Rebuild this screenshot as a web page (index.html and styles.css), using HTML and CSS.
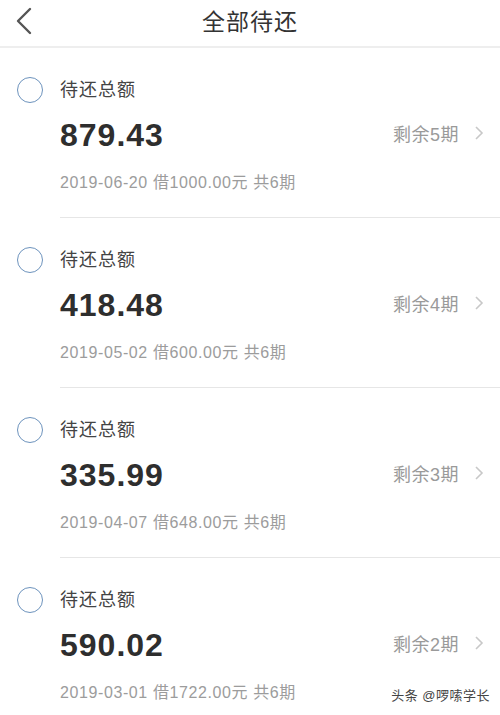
FILE: index.html
```html
<!DOCTYPE html>
<html lang="zh-CN">
<head>
    <meta charset="UTF-8">
    <meta name="viewport" content="width=device-width, initial-scale=1.0">
    <title>全部待还</title>
    <link rel="stylesheet" href="styles.css">
</head>
<body>
    <header class="topbar">
        <svg class="back" width="18" height="28" viewBox="0 0 18 28"><path d="M15 2 L3 14 L15 26" fill="none" stroke="#555" stroke-width="2.4" stroke-linecap="round" stroke-linejoin="round"/></svg>
        <h1 class="title">全部待还</h1>
    </header>
    <section class="list">
        <div class="item">
            <div class="check"><span class="circle"></span></div>
            <div class="info">
                <div class="label">待还总额</div>
                <div class="row">
                    <span class="amount">879.43</span>
                    <span class="remain">剩余5期<svg class="arrow" width="10" height="16" viewBox="0 0 10 16"><path d="M2 2 L8 8 L2 14" fill="none" stroke="#c8c8c8" stroke-width="1.6"/></svg></span>
                </div>
                <div class="meta">2019-06-20 借1000.00元 共6期</div>
            </div>
        </div>
        <div class="item">
            <div class="check"><span class="circle"></span></div>
            <div class="info">
                <div class="label">待还总额</div>
                <div class="row">
                    <span class="amount">418.48</span>
                    <span class="remain">剩余4期<svg class="arrow" width="10" height="16" viewBox="0 0 10 16"><path d="M2 2 L8 8 L2 14" fill="none" stroke="#c8c8c8" stroke-width="1.6"/></svg></span>
                </div>
                <div class="meta">2019-05-02 借600.00元 共6期</div>
            </div>
        </div>
        <div class="item">
            <div class="check"><span class="circle"></span></div>
            <div class="info">
                <div class="label">待还总额</div>
                <div class="row">
                    <span class="amount">335.99</span>
                    <span class="remain">剩余3期<svg class="arrow" width="10" height="16" viewBox="0 0 10 16"><path d="M2 2 L8 8 L2 14" fill="none" stroke="#c8c8c8" stroke-width="1.6"/></svg></span>
                </div>
                <div class="meta">2019-04-07 借648.00元 共6期</div>
            </div>
        </div>
        <div class="item">
            <div class="check"><span class="circle"></span></div>
            <div class="info">
                <div class="label">待还总额</div>
                <div class="row">
                    <span class="amount">590.02</span>
                    <span class="remain">剩余2期<svg class="arrow" width="10" height="16" viewBox="0 0 10 16"><path d="M2 2 L8 8 L2 14" fill="none" stroke="#c8c8c8" stroke-width="1.6"/></svg></span>
                </div>
                <div class="meta">2019-03-01 借1722.00元 共6期</div>
            </div>
        </div>
    </section>
    <div class="watermark">头条 @啰嗦学长</div>
</body>
</html>
```

FILE: styles.css
```css
*{
    padding:0;
    margin:0;
    box-sizing:border-box;
}
body{
    width:500px;
    height:715px;
    overflow:hidden;
    background:#fff;
    font-family:"Liberation Sans","Noto Sans CJK SC",sans-serif;
    color:#333;
    position:relative;
}
.topbar{
    height:48px;
    border-bottom:2px solid #eeeeee;
    display:flex;
    align-items:center;
    justify-content:center;
    position:relative;
}
.back{
    position:absolute;
    left:15px;
    top:7px;
}
.title{
    font-size:23px;
    font-weight:normal;
    color:#333;
    letter-spacing:1px;
    margin-top:-6px;
}
.item{
    display:flex;
    height:170px;
}
.check{
    width:60px;
    padding-top:29px;
    display:flex;
    justify-content:center;
}
.circle{
    width:26px;
    height:26px;
    border:1.6px solid #6d93bd;
    border-radius:50%;
}
.info{
    flex-grow:1;
    padding-top:30px;
    border-bottom:1px solid #e6e6e6;
}
.label{
    font-size:18px;
    line-height:24px;
    color:#444;
    letter-spacing:1px;
}
.row{
    display:flex;
    justify-content:space-between;
    align-items:center;
    margin-top:13px;
    height:40px;
}
.amount{
    font-size:32px;
    font-weight:bold;
    color:#2e2e2e;
    letter-spacing:1px;
}
.remain{
    font-size:18px;
    color:#9a9a9a;
    letter-spacing:0.5px;
    display:flex;
    align-items:center;
    margin-right:16px;
    margin-top:-4px;
}
.arrow{
    margin-left:15px;
}
.meta{
    margin-top:18px;
    font-size:16px;
    line-height:20px;
    color:#9c9c9c;
    letter-spacing:0.6px;
}
.watermark{
    position:absolute;
    right:10px;
    bottom:11px;
    font-size:13px;
    color:#444;
    letter-spacing:0.5px;
    text-shadow:0 0 2px #fff;
}
```
